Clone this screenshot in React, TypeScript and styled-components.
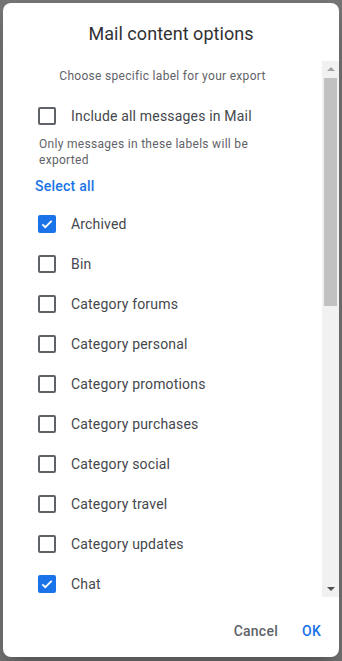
import { useState } from "react";
import styled, { createGlobalStyle } from "styled-components";

const GlobalStyle = createGlobalStyle`
  html, body {
    margin: 0;
    padding: 0;
    height: 100%;
  }
  body {
    font-family: Roboto, "Liberation Sans", Arial, sans-serif;
    background: #757575;
  }
`;

const Backdrop = styled.div`
  height: 100vh;
  box-sizing: border-box;
  padding: 3px 3px 4px 3px;
  display: flex;
  align-items: flex-start;
`;

const Dialog = styled.div`
  width: 336px;
  height: 654px;
  background: #fff;
  border-radius: 8px;
  overflow: hidden;
  display: flex;
  flex-direction: column;
  box-shadow: 0 11px 15px -7px rgba(0, 0, 0, 0.2), 0 24px 38px 3px rgba(0, 0, 0, 0.14);
`;

const Title = styled.h2`
  margin: 0;
  height: 58px;
  box-sizing: border-box;
  padding-top: 19px;
  text-align: center;
  font-size: 18px;
  line-height: 24px;
  font-weight: 400;
  color: #303134;
  letter-spacing: 0.05px;
`;

const Body = styled.div`
  height: 536px;
  display: flex;
`;

const Scroller = styled.div`
  flex: 1;
  overflow-y: auto;
  scrollbar-width: none;
  &::-webkit-scrollbar {
    display: none;
  }
`;

const Content = styled.div`
  padding: 7px 0 16px 32px;
`;

const Subtitle = styled.p`
  margin: 0 0 12px -32px;
  text-align: center;
  font-size: 12px;
  line-height: 16px;
  letter-spacing: 0.3px;
  color: #5f6368;
`;

const Row = styled.label`
  height: 40px;
  display: flex;
  align-items: center;
  gap: 12px;
  cursor: pointer;
  font-size: 14px;
  letter-spacing: 0.18px;
  color: #44474b;
`;

const BoxWrap = styled.span`
  width: 24px;
  height: 24px;
  display: flex;
  align-items: center;
  justify-content: center;
`;

const Box = styled.span<{ $checked: boolean }>`
  width: 18px;
  height: 18px;
  box-sizing: border-box;
  border-radius: 2px;
  border: 2px solid ${(p) => (p.$checked ? "#1a73e8" : "#5f6368")};
  background: ${(p) => (p.$checked ? "#1a73e8" : "transparent")};
  display: flex;
  align-items: center;
  justify-content: center;
`;

const Note = styled.p`
  margin: 0;
  padding-left: 4px;
  max-width: 226px;
  font-size: 12px;
  line-height: 16px;
  letter-spacing: 0.3px;
  color: #5f6368;
`;

const SelectAll = styled.button`
  height: 36px;
  padding: 0;
  margin: 0;
  border: none;
  background: none;
  font-family: inherit;
  font-size: 14px;
  font-weight: 500;
  letter-spacing: 0.25px;
  color: #1a73e8;
  cursor: pointer;
  display: block;
`;

const Track = styled.div`
  width: 17px;
  background: #f1f1f1;
  display: flex;
  flex-direction: column;
`;

const Arrow = styled.div<{ $down?: boolean }>`
  height: 17px;
  display: flex;
  align-items: center;
  justify-content: center;
  &::after {
    content: "";
    border-left: 4px solid transparent;
    border-right: 4px solid transparent;
    ${(p) =>
      p.$down
        ? "border-top: 4px solid #505050; margin-top: 1px;"
        : "border-bottom: 4px solid #a3a3a3; margin-bottom: 1px;"}
  }
`;

const Thumb = styled.div`
  margin: 0 2px;
  height: 228px;
  background: #c1c1c1;
`;

const Spacer = styled.div`
  flex: 1;
`;

const Footer = styled.div`
  flex: 1;
  display: flex;
  justify-content: flex-end;
  align-items: center;
  gap: 8px;
  padding: 8px 10px 0 0;
`;

const TextButton = styled.button<{ $primary?: boolean }>`
  height: 36px;
  padding: 0 8px;
  border: none;
  background: none;
  font-family: inherit;
  font-size: 14px;
  font-weight: 500;
  letter-spacing: 0.25px;
  color: ${(p) => (p.$primary ? "#1a73e8" : "#5f6368")};
  cursor: pointer;
`;

const labels = [
  "Archived",
  "Bin",
  "Category forums",
  "Category personal",
  "Category promotions",
  "Category purchases",
  "Category social",
  "Category travel",
  "Category updates",
  "Chat",
  "Drafts",
  "Important",
  "Inbox",
  "Opened",
  "Sent",
  "Spam",
  "Starred",
  "Unread",
];

const Check = ({ checked }: { checked: boolean }) => (
  <BoxWrap>
    <Box $checked={checked}>
      {checked && (
        <svg width="14" height="14" viewBox="0 0 24 24">
          <path d="M4 12.5l5 5L20 6.5" fill="none" stroke="#fff" strokeWidth="3.2" />
        </svg>
      )}
    </Box>
  </BoxWrap>
);

const App = () => {
  const [all, setAll] = useState(false);
  const [picked, setPicked] = useState<string[]>(["Archived", "Chat"]);

  const toggle = (name: string) =>
    setPicked((p) => (p.includes(name) ? p.filter((n) => n !== name) : [...p, name]));

  return (
    <>
      <GlobalStyle />
      <Backdrop>
        <Dialog>
          <Title>Mail content options</Title>
          <Body>
            <Scroller>
              <Content>
                <Subtitle>Choose specific label for your export</Subtitle>
                <Row onClick={() => setAll(!all)}>
                  <Check checked={all} />
                  Include all messages in Mail
                </Row>
                <Note>Only messages in these labels will be exported</Note>
                <SelectAll onClick={() => setPicked(labels)}>Select all</SelectAll>
                {labels.map((name) => (
                  <Row key={name} onClick={() => toggle(name)}>
                    <Check checked={picked.includes(name)} />
                    {name}
                  </Row>
                ))}
              </Content>
            </Scroller>
            <Track>
              <Arrow />
              <Thumb />
              <Spacer />
              <Arrow $down />
            </Track>
          </Body>
          <Footer>
            <TextButton>Cancel</TextButton>
            <TextButton $primary>OK</TextButton>
          </Footer>
        </Dialog>
      </Backdrop>
    </>
  );
};

export default App;
